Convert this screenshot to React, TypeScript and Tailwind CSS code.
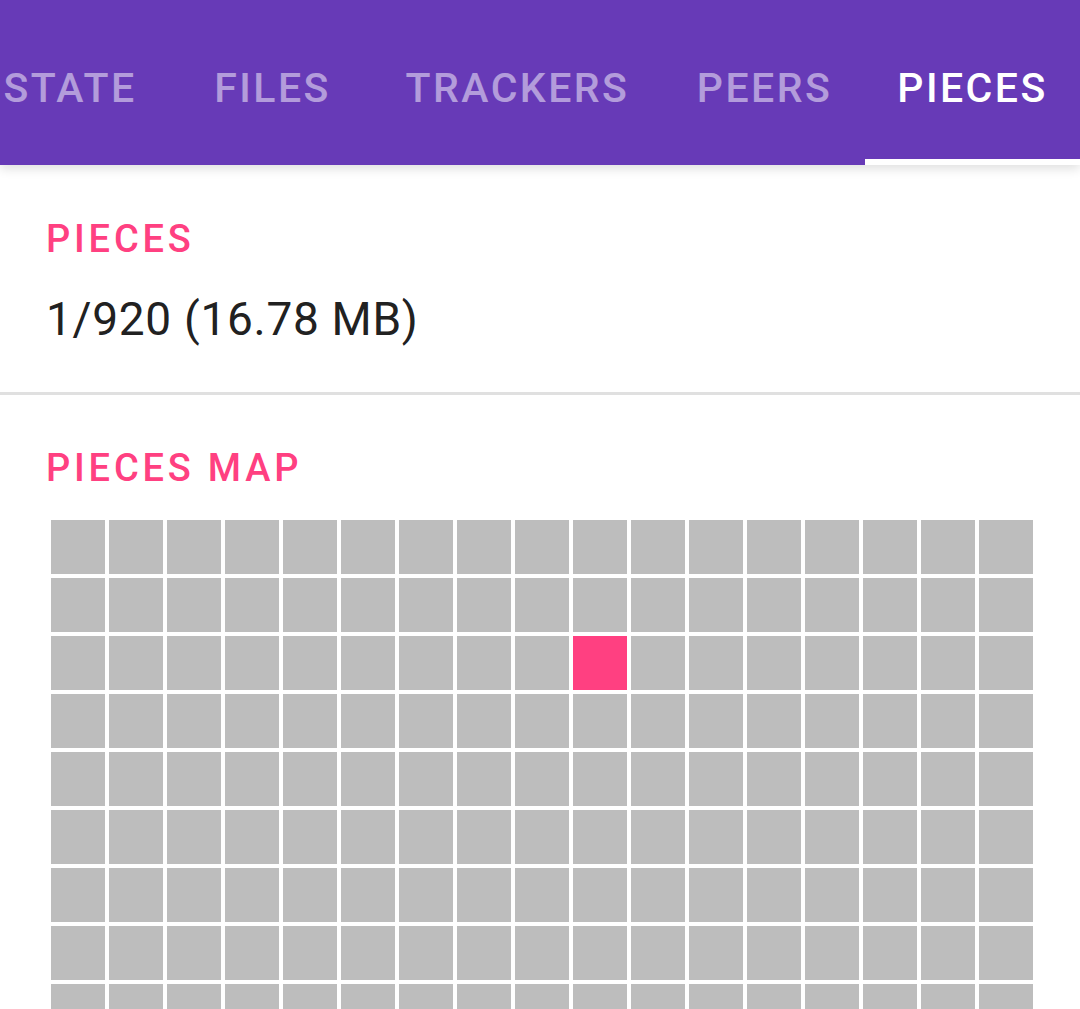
import React from "react";

const tabs = [
  { label: "STATE", width: "w-[208px]" },
  { label: "FILES", width: "w-[197px]" },
  { label: "TRACKERS", width: "w-[293px]" },
  { label: "PEERS", width: "w-[201px]" },
  { label: "PIECES", width: "w-[215px]" },
];

const TOTAL_PIECES = 920;
const DONE = new Set([43]);

const App: React.FC = () => {
  const active = "PIECES";

  return (
    <div className="min-h-screen bg-white" style={{ fontFamily: "Roboto, 'Noto Sans', sans-serif" }}>
      {/* tab bar */}
      <header className="relative z-10 h-[165px] bg-[#673ab7] shadow-[0_4px_10px_rgba(0,0,0,0.12)] overflow-hidden flex justify-end">
        {tabs.map((t) => (
          <div
            key={t.label}
            className={`relative shrink-0 ${t.width} h-full flex items-center justify-center pt-[10px]`}
          >
            <span
              className={`text-[41px] leading-[48px] font-medium tracking-[0.06em] ${
                t.label === active ? "text-white" : "text-white/50"
              }`}
            >
              {t.label}
            </span>
            {t.label === active && (
              <div className="absolute left-0 right-0 bottom-0 h-[6px] bg-white" />
            )}
          </div>
        ))}
      </header>

      {/* pieces count */}
      <section className="px-[46px] pt-[50px] pb-[45px]">
        <div className="text-[38px] leading-[48px] font-medium tracking-[0.1em] text-[#ff4081]">PIECES</div>
        <div className="mt-[28px] text-[46px] leading-[56px] tracking-[0.7px] text-[#212121]">1/920 (16.78 MB)</div>
      </section>

      <div className="h-[3px] bg-[#e0e0e0]" />

      {/* pieces map */}
      <section className="px-[46px] pt-[49px]">
        <div className="text-[38px] leading-[48px] font-medium tracking-[0.1em] text-[#ff4081]">PIECES MAP</div>
        <div className="mt-[28px] pl-[5px] grid grid-cols-[repeat(17,54px)] gap-[4px]">
          {Array.from({ length: TOTAL_PIECES }).map((_, i) => (
            <div
              key={i}
              className={`h-[54px] ${DONE.has(i) ? "bg-[#ff4081]" : "bg-[#bdbdbd]"}`}
            />
          ))}
        </div>
      </section>
    </div>
  );
};

export default App;
